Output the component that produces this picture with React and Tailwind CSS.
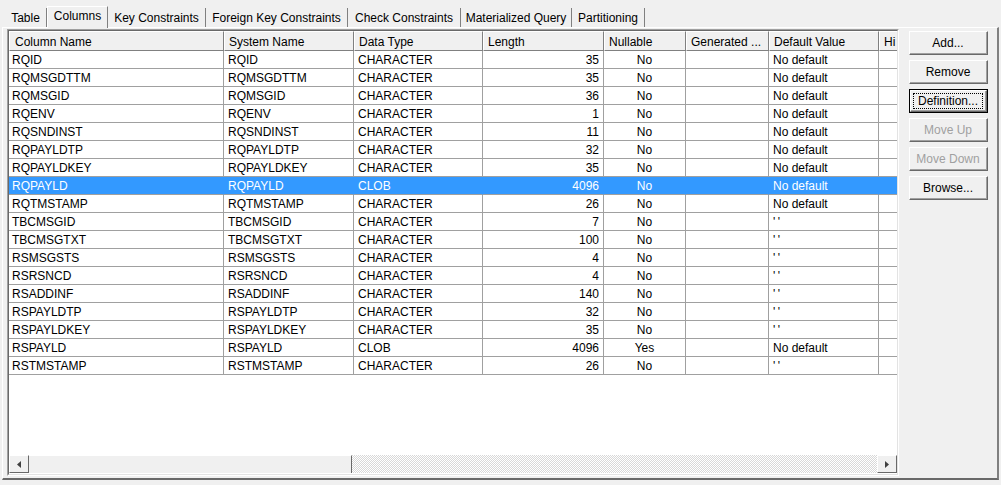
import React from "react";

const cols = [
  { key: 0, label: "Column Name", w: 215, align: "left" },
  { key: 1, label: "System Name", w: 130, align: "left" },
  { key: 2, label: "Data Type", w: 129, align: "left" },
  { key: 3, label: "Length", w: 121, align: "right" },
  { key: 4, label: "Nullable", w: 82, align: "center" },
  { key: 5, label: "Generated ...", w: 83, align: "left" },
  { key: 6, label: "Default Value", w: 110, align: "left" },
  { key: 7, label: "Hi", w: 60, align: "left" },
];

const Q = "'\u2009'";

const rows = [
  ["RQID", "RQID", "CHARACTER", "35", "No", "", "No default"],
  ["RQMSGDTTM", "RQMSGDTTM", "CHARACTER", "35", "No", "", "No default"],
  ["RQMSGID", "RQMSGID", "CHARACTER", "36", "No", "", "No default"],
  ["RQENV", "RQENV", "CHARACTER", "1", "No", "", "No default"],
  ["RQSNDINST", "RQSNDINST", "CHARACTER", "11", "No", "", "No default"],
  ["RQPAYLDTP", "RQPAYLDTP", "CHARACTER", "32", "No", "", "No default"],
  ["RQPAYLDKEY", "RQPAYLDKEY", "CHARACTER", "35", "No", "", "No default"],
  ["RQPAYLD", "RQPAYLD", "CLOB", "4096", "No", "", "No default"],
  ["RQTMSTAMP", "RQTMSTAMP", "CHARACTER", "26", "No", "", "No default"],
  ["TBCMSGID", "TBCMSGID", "CHARACTER", "7", "No", "", Q],
  ["TBCMSGTXT", "TBCMSGTXT", "CHARACTER", "100", "No", "", Q],
  ["RSMSGSTS", "RSMSGSTS", "CHARACTER", "4", "No", "", Q],
  ["RSRSNCD", "RSRSNCD", "CHARACTER", "4", "No", "", Q],
  ["RSADDINF", "RSADDINF", "CHARACTER", "140", "No", "", Q],
  ["RSPAYLDTP", "RSPAYLDTP", "CHARACTER", "32", "No", "", Q],
  ["RSPAYLDKEY", "RSPAYLDKEY", "CHARACTER", "35", "No", "", Q],
  ["RSPAYLD", "RSPAYLD", "CLOB", "4096", "Yes", "", "No default"],
  ["RSTMSTAMP", "RSTMSTAMP", "CHARACTER", "26", "No", "", Q],
];

const tabs = [
  { label: "Table", w: 42 },
  { label: "Columns", w: 61, selected: true },
  { label: "Key Constraints", w: 98 },
  { label: "Foreign Key Constraints", w: 142 },
  { label: "Check Constraints", w: 113 },
  { label: "Materialized Query", w: 111 },
  { label: "Partitioning", w: 73 },
];

function Btn({ children, disabled, focused }) {
  const inner = (
    <div className="h-full w-full border-t border-l border-t-white border-l-white border-r border-b border-r-[#696969] border-b-[#696969]">
      <div className="h-full w-full border-r border-b border-r-[#a0a0a0] border-b-[#a0a0a0] flex items-center justify-center pt-[1px]">
        {focused ? (
          <div className="border border-dotted border-black px-[2px] h-[16px] w-[70px] flex items-center justify-center leading-none">
            {children}
          </div>
        ) : (
          <span className={disabled ? "text-[#a0a0a0]" : ""}>{children}</span>
        )}
      </div>
    </div>
  );
  return (
    <div className={"h-[24px] w-[79px] bg-[#f0f0f0] " + (focused ? "border border-black" : "")}>
      {inner}
    </div>
  );
}

function Tri({ dir }) {
  return (
    <svg width="4" height="7" viewBox="0 0 4 7">
      {dir === "left" ? (
        <polygon points="4,0 4,7 0,3.5" fill="#404040" />
      ) : (
        <polygon points="0,0 0,7 4,3.5" fill="#404040" />
      )}
    </svg>
  );
}

export default function App() {
  return (
    <div
      className="w-[1001px] h-[485px] bg-[#f0f0f0] overflow-hidden text-[12px] text-black leading-none"
      style={{ fontFamily: '"Liberation Sans", Arial, sans-serif' }}
    >
      {/* Tabs */}
      <div className="flex items-end h-[27px] pl-[5px] relative z-10">
        {tabs.map((t) =>
          t.selected ? (
            <div
              key={t.label}
              style={{ width: t.w }}
              className="h-[22px] -mb-[1px] bg-[#f0f0f0] border-t border-l border-white border-r border-r-[#808080] flex items-start pt-[3px] justify-center"
            >
              {t.label}
            </div>
          ) : (
            <div
              key={t.label}
              style={{ width: t.w }}
              className="h-[19px] border-r border-r-[#808080] flex items-center justify-center pt-[1px]"
            >
              {t.label}
            </div>
          )
        )}
      </div>

      {/* Panel */}
      <div className="ml-[2px] w-[997px] h-[453px] border-t border-l border-white border-r-2 border-b-2 border-r-[#808080] border-b-[#696969] flex pl-[4px] pt-[1px]">
        {/* Table */}
        <div className="w-[892px] h-[447px] border-t border-l border-t-[#a0a0a0] border-l-[#a0a0a0] border-r border-b border-r-white border-b-white">
          <div className="w-full h-full border-t border-l border-t-[#696969] border-l-[#696969] border-r border-b border-r-[#e3e3e3] border-b-[#e3e3e3] bg-white flex flex-col">
            <div className="flex-1 overflow-hidden">
              {/* header */}
              <div className="flex h-[20px] whitespace-nowrap">
                {cols.map((c) => (
                  <div
                    key={c.key}
                    style={{ width: c.w, minWidth: c.w }}
                    className={
                      "h-full bg-[#f0f0f0] border-t border-l border-white border-r border-b border-r-[#808080] border-b-[#808080] flex items-center pt-[1px] overflow-hidden " +
                      (c.key === 0 ? "pl-[5px]" : "pl-[4px]")
                    }
                  >
                    {c.label}
                  </div>
                ))}
              </div>
              {/* rows */}
              {rows.map((r, i) => {
                const sel = i === 7;
                return (
                  <div
                    key={i}
                    className={
                      "flex h-[18px] whitespace-nowrap " +
                      (sel ? "bg-[#3399ff] text-white" : "")
                    }
                  >
                    {cols.map((c) => (
                      <div
                        key={c.key}
                        style={{ width: c.w, minWidth: c.w }}
                        className={
                          "h-full border-r border-b flex items-center pt-[1px] overflow-hidden " +
                          (sel
                            ? "border-r-[#3399ff] border-b-[#a0a0a0] "
                            : "border-r-[#a0a0a0] border-b-[#a0a0a0] ") +
                          (c.align === "right"
                            ? "justify-end pr-[4px]"
                            : c.align === "center"
                            ? "justify-center"
                            : c.key === 0
                            ? "pl-[3px]"
                            : "pl-[4px]")
                        }
                      >
                        {c.key < 7 ? r[c.key] : ""}
                      </div>
                    ))}
                  </div>
                );
              })}
            </div>
            {/* horizontal scrollbar */}
            <div className="flex h-[18px] mb-[1px]">
              <div className="w-[20px] h-full bg-[#f0f0f0] border-t border-l border-white border-r border-b border-r-[#696969] border-b-[#696969] flex items-center justify-center">
                <Tri dir="left" />
              </div>
              <div className="w-[323px] h-full bg-[#f0f0f0] border-t border-t-white border-r border-r-[#696969]" />
              <div className="flex-1 h-full bg-[repeating-conic-gradient(#ffffff_0_25%,#d8d8d8_0_50%)] bg-[length:2px_2px]" />
              <div className="w-[20px] h-full bg-[#f0f0f0] border-t border-l border-white border-r border-b border-r-[#696969] border-b-[#696969] flex items-center justify-center">
                <Tri dir="right" />
              </div>
            </div>
          </div>
        </div>

        {/* Buttons */}
        <div className="ml-[10px] mt-[2px] flex flex-col gap-[5px]">
          <Btn>Add...</Btn>
          <Btn>Remove</Btn>
          <Btn focused>Definition...</Btn>
          <Btn disabled>Move Up</Btn>
          <Btn disabled>Move Down</Btn>
          <Btn>Browse...</Btn>
        </div>
      </div>
    </div>
  );
}
